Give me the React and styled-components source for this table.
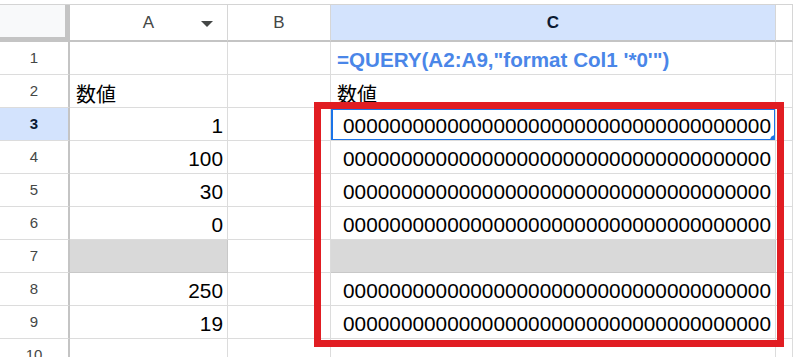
import styled, { createGlobalStyle } from 'styled-components';

const GlobalStyle = createGlobalStyle`
  html, body {
    margin: 0;
    padding: 0;
    background: #fff;
    overflow: hidden;
  }
  body {
    width: 793px;
    height: 357px;
  }
`;

const Page = styled.div`
  position: relative;
  width: 793px;
  height: 357px;
  padding-top: 4px;
  box-sizing: border-box;
  overflow: hidden;
`;

const Sheet = styled.div`
  display: grid;
  grid-template-columns: 70px 158px 103px 445px 1fr;
  grid-template-rows: 37px repeat(10, 33px);
  border-top: 1px solid #d4d4d4;
`;

const Corner = styled.div`
  box-sizing: border-box;
  background: #f8f9fa;
  border-right: 5px solid #c4c4c4;
  border-bottom: 5px solid #c4c4c4;
`;

const ColHead = styled.div`
  position: relative;
  box-sizing: border-box;
  display: flex;
  align-items: center;
  justify-content: center;
  background: ${(p) => (p.$active ? '#d3e3fd' : '#fff')};
  border-right: 1px solid #d6d6d6;
  border-bottom: 2px solid #c4c4c4;
  font-family: 'Liberation Sans', Arial, sans-serif;
  font-size: 17px;
  font-weight: ${(p) => (p.$active ? 700 : 400)};
  color: ${(p) => (p.$active ? '#0b1a33' : '#444746')};
`;

const MenuArrow = styled.svg`
  position: absolute;
  right: 14px;
  top: 16px;
`;

const RowHead = styled.div`
  box-sizing: border-box;
  display: flex;
  align-items: center;
  justify-content: center;
  background: ${(p) => (p.$active ? '#d3e3fd' : '#fff')};
  border-right: 2px solid #c4c4c4;
  border-bottom: 1px solid #dcdcdc;
  font-family: 'Liberation Sans', Arial, sans-serif;
  font-size: 15px;
  padding-bottom: 1px;
  font-weight: ${(p) => (p.$active ? 700 : 400)};
  color: ${(p) => (p.$active ? '#0b1a33' : '#444746')};
`;

const Cell = styled.div`
  position: relative;
  box-sizing: border-box;
  display: flex;
  align-items: flex-end;
  justify-content: ${(p) => (p.$right ? 'flex-end' : 'flex-start')};
  padding: 0 ${(p) => (p.$right ? '4px' : '0')} 2px ${(p) => (p.$right ? '0' : '6px')};
  background: ${(p) => (p.$gray ? '#d9d9d9' : '#fff')};
  border-right: 1px solid ${(p) => (p.$gray ? '#c8c8c8' : '#dcdcdc')};
  border-bottom: 1px solid ${(p) => (p.$gray ? '#c8c8c8' : '#dcdcdc')};
  overflow: hidden;
  white-space: nowrap;
  font-family: 'Liberation Sans', Arial, 'Noto Sans CJK JP', sans-serif;
  font-size: 20.8px;
  line-height: 24px;
  color: #000;
`;

const Formula = styled.span`
  font-weight: 700;
  font-size: 20.6px;
  color: #4a86e8;
`;

const Label = styled.span`
  font-family: 'Noto Sans CJK JP', sans-serif;
  font-size: 20px;
  line-height: 24px;
  position: relative;
  top: 1px;
`;

const Selection = styled.div`
  position: absolute;
  top: 0;
  left: 0;
  right: -1px;
  bottom: -1px;
  border: 2px solid #1a73e8;
  pointer-events: none;
`;

const FillHandle = styled.div`
  position: absolute;
  right: -6px;
  bottom: -6px;
  width: 11px;
  height: 11px;
  border-radius: 50%;
  background: #1a73e8;
  z-index: 2;
`;

const Highlight = styled.div`
  position: absolute;
  left: 314px;
  top: 102px;
  width: 470px;
  height: 245px;
  box-sizing: border-box;
  border: 7px solid #e11d22;
  pointer-events: none;
`;

const ZEROS = '0'.repeat(37);

const rows = [
  { n: 1, a: '', c: 'formula' },
  { n: 2, a: 'label', c: 'label' },
  { n: 3, a: '1', c: 'zeros', active: true },
  { n: 4, a: '100', c: 'zeros' },
  { n: 5, a: '30', c: 'zeros' },
  { n: 6, a: '0', c: 'zeros' },
  { n: 7, gray: true },
  { n: 8, a: '250', c: 'zeros' },
  { n: 9, a: '19', c: 'zeros' },
  { n: 10 },
];

const renderA = (r) => {
  if (r.a === 'label') return <Cell><Label>数値</Label></Cell>;
  return <Cell $right $gray={r.gray}>{r.a}</Cell>;
};

const renderC = (r) => {
  if (r.c === 'formula') {
    return <Cell><Formula>=QUERY(A2:A9,"format Col1 '*0'")</Formula></Cell>;
  }
  if (r.c === 'label') return <Cell><Label>数値</Label></Cell>;
  if (r.c === 'zeros') {
    return (
      <Cell $right>
        {ZEROS}
        {r.active && (
          <>
            <Selection />
            <FillHandle />
          </>
        )}
      </Cell>
    );
  }
  return <Cell $gray={r.gray} />;
};

const App = () => {
  return (
    <Page>
      <GlobalStyle />
      <Sheet>
        <Corner />
        <ColHead>
          A
          <MenuArrow width="12" height="6" viewBox="0 0 12 6">
            <path d="M0 0 L12 0 L6 6 Z" fill="#444746" />
          </MenuArrow>
        </ColHead>
        <ColHead>B</ColHead>
        <ColHead $active>C</ColHead>
        <ColHead />

        {rows.map((r) => (
          <Row key={r.n} r={r} />
        ))}
      </Sheet>
      <Highlight />
    </Page>
  );
};

const Row = ({ r }) => (
  <>
    <RowHead $active={r.active}>{r.n}</RowHead>
    {renderA(r)}
    <Cell />
    {renderC(r)}
    <Cell />
  </>
);

export default App;
